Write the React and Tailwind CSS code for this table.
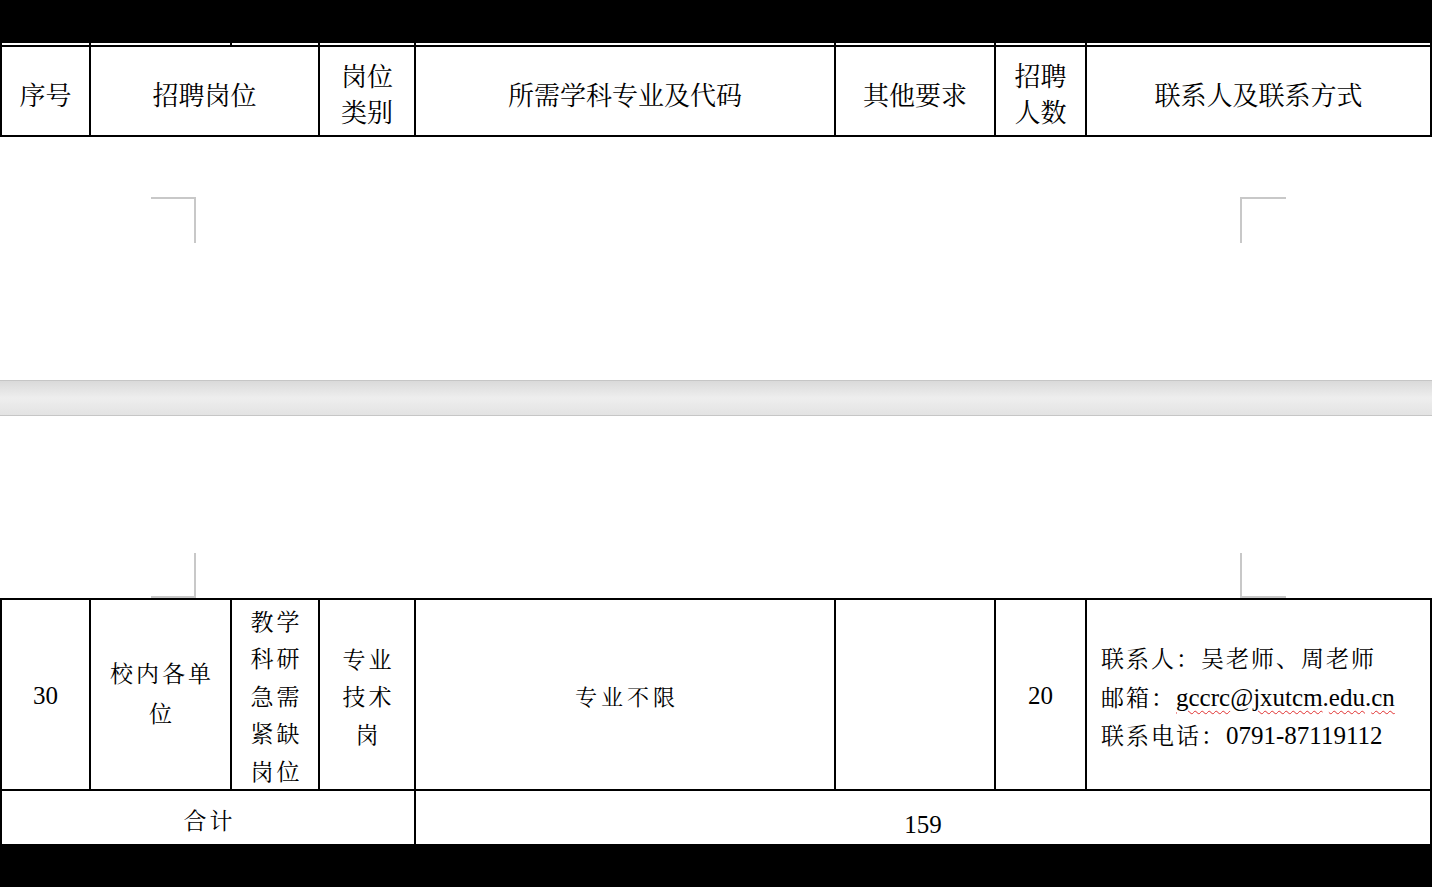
import React from "react";

const FONT = "font-['Liberation_Serif','Noto_Serif_CJK_SC','Noto_Sans_CJK_SC',serif]";

function Cell({ className = "", children }) {
  return (
    <div className={`border-r-2 border-b-2 border-black flex flex-col items-center justify-center text-center ${className}`}>
      {children}
    </div>
  );
}

function Squiggle({ children }) {
  return (
    <span className="underline decoration-wavy decoration-[#e03030] decoration-1 underline-offset-[4px]">
      {children}
    </span>
  );
}

export default function App() {
  const cols = "grid grid-cols-[91px_141px_88px_96px_420px_160px_91px_345px]";
  return (
    <div className={`w-[1432px] h-[887px] overflow-hidden bg-white flex flex-col text-black ${FONT}`}>
      {/* top black band */}
      <div className="h-[43px] bg-black shrink-0" />

      {/* stubs of previous row borders */}
      <div className={`${cols} h-[2px] shrink-0`}>
        <div className="border-l-2 border-r-2 border-black" />
        <div className="border-r-2 border-black" />
        <div className="border-r-2 border-black" />
        <div className="border-r-2 border-black" />
        <div className="border-r-2 border-black" />
        <div className="border-r-2 border-black" />
        <div className="border-r-2 border-black" />
        <div className="border-r-2 border-black" />
      </div>

      {/* header row */}
      <div className={`${cols} border-t-2 border-black h-[92px] shrink-0 text-[26px] leading-[36px]`}>
        <Cell className="border-l-2 pt-[12px]">序号</Cell>
        <Cell className="col-span-2 pt-[12px]">招聘岗位</Cell>
        <Cell className="pt-[10px]">
          <div>岗位</div>
          <div>类别</div>
        </Cell>
        <Cell className="pt-[12px]">所需学科专业及代码</Cell>
        <Cell className="pt-[12px]">其他要求</Cell>
        <Cell className="pt-[10px]">
          <div>招聘</div>
          <div>人数</div>
        </Cell>
        <Cell className="pt-[12px]">联系人及联系方式</Cell>
      </div>

      {/* page bottom area with crop marks */}
      <div className="relative h-[243px] shrink-0">
        <div className="absolute left-[151px] top-[60px] w-[45px] h-[46px] border-t-2 border-r-2 border-[#c8c8c8]" />
        <div className="absolute left-[1240px] top-[60px] w-[46px] h-[46px] border-t-2 border-l-2 border-[#c8c8c8]" />
      </div>

      {/* page gap */}
      <div className="h-[36px] shrink-0 border-t border-b border-[#c6c6c6] bg-gradient-to-b from-[#dadada] via-[#eeeeee] to-[#e3e3e3]" />

      {/* next page top area with crop marks */}
      <div className="relative h-[182px] shrink-0">
        <div className="absolute left-[151px] top-[137px] w-[45px] h-[45px] border-b-2 border-r-2 border-[#c8c8c8]" />
        <div className="absolute left-[1240px] top-[137px] w-[46px] h-[45px] border-b-2 border-l-2 border-[#c8c8c8]" />
      </div>

      {/* data table */}
      <div className={`${cols} border-t-2 border-black shrink-0`}>
        <Cell className="border-l-2 h-[191px] text-[25px] pt-[2px]">30</Cell>
        <Cell className="h-[191px] text-[23px] leading-[40px] tracking-[3px]">
          <div className="pl-[3px]">校内各单</div>
          <div className="pl-[3px]">位</div>
        </Cell>
        <Cell className="h-[191px] text-[23px] leading-[37.5px] tracking-[3px] pt-[6px]">
          <div className="pl-[3px]">教学</div>
          <div className="pl-[3px]">科研</div>
          <div className="pl-[3px]">急需</div>
          <div className="pl-[3px]">紧缺</div>
          <div className="pl-[3px]">岗位</div>
        </Cell>
        <Cell className="h-[191px] text-[23px] leading-[37.5px] tracking-[3px] pt-[7px]">
          <div className="pl-[3px]">专业</div>
          <div className="pl-[3px]">技术</div>
          <div className="pl-[3px]">岗</div>
        </Cell>
        <Cell className="h-[191px] text-[22px] tracking-[4px] pt-[5px]">
          <div className="pl-[4px]">专业不限</div>
        </Cell>
        <Cell className="h-[191px]" />
        <Cell className="h-[191px] text-[25px] pt-[2px]">20</Cell>
        <div className="border-r-2 border-b-2 border-black h-[191px] flex flex-col justify-center pl-[14px] pt-[8px] text-[23px] leading-[37.5px] tracking-[2px] text-left">
          <div>联系人：吴老师、周老师</div>
          <div className="whitespace-nowrap">
            邮箱：<span className="text-[25px] tracking-normal"><Squiggle>gccrc</Squiggle>@<Squiggle>jxutcm</Squiggle>.<Squiggle>edu</Squiggle>.<Squiggle>cn</Squiggle></span>
          </div>
          <div className="whitespace-nowrap">
            联系电话：<span className="text-[25px] tracking-normal">0791-87119112</span>
          </div>
        </div>

        {/* total row */}
        <div className="col-span-4 border-l-2 border-r-2 border-black h-[53px] flex justify-center pt-[16px] text-[23px] leading-[30px] tracking-[3px]">
          <span className="pl-[3px]">合计</span>
        </div>
        <div className="col-span-4 border-r-2 border-black h-[53px] flex justify-center pt-[19px] text-[25px] leading-[30px]">
          159
        </div>
      </div>

      {/* bottom black band */}
      <div className="h-[43px] bg-black shrink-0" />
    </div>
  );
}
